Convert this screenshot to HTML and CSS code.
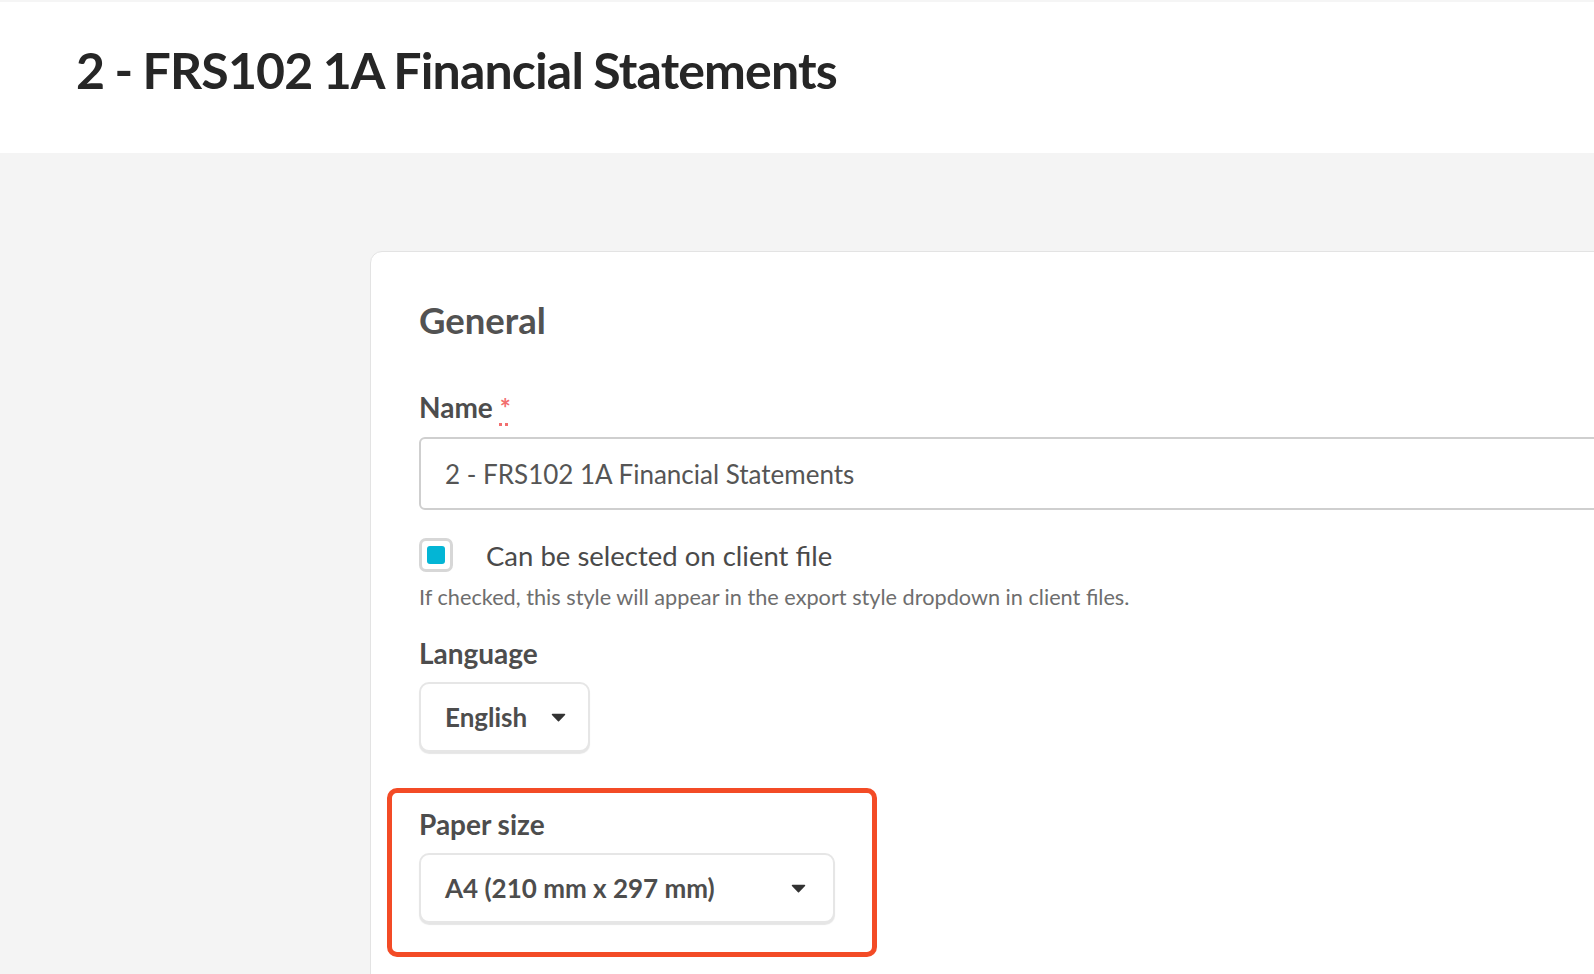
FILE: index.html
```html
<!DOCTYPE html>
<html lang="en">
<head>
<meta charset="utf-8">
<title>2 - FRS102 1A Financial Statements</title>
<link rel="stylesheet" href="styles.css">
</head>
<body>
<header class="page-header">
  <h1 class="page-title">2 - FRS102 1A Financial Statements</h1>
</header>
<main class="page-main">
  <section class="card">
    <h2 class="card-title">General</h2>

    <div class="field">
      <label class="field-label" for="name">Name <abbr class="req" title="required">*</abbr></label>
      <input class="text-input" id="name" type="text" value="2 - FRS102 1A Financial Statements">
    </div>

    <div class="field field-check">
      <label class="check-row">
        <span class="check-box"><span class="check-fill"></span></span>
        <span class="check-label">Can be selected on client file</span>
      </label>
      <p class="help">If checked, this style will appear in the export style dropdown in client files.</p>
    </div>

    <div class="field field-lang">
      <div class="field-label">Language</div>
      <div class="select select-lang">
        <span class="select-value">English</span>
        <svg class="caret" width="15" height="9" viewBox="0 0 15 9"><path d="M1.5 1.5 H13.5 L7.5 7.8 Z" fill="#333" stroke="#333" stroke-width="1.5" stroke-linejoin="round"/></svg>
      </div>
    </div>

    <div class="highlight">
      <div class="field-label">Paper size</div>
      <div class="select select-paper">
        <span class="select-value">A4 (210 mm x 297 mm)</span>
        <svg class="caret" width="15" height="9" viewBox="0 0 15 9"><path d="M1.5 1.5 H13.5 L7.5 7.8 Z" fill="#333" stroke="#333" stroke-width="1.5" stroke-linejoin="round"/></svg>
      </div>
    </div>
  </section>
</main>
</body>
</html>
```

FILE: styles.css
```css
* { box-sizing: border-box; }

html, body {
  margin: 0;
  padding: 0;
}

body {
  background: #f4f4f4;
  font-family: Lato, "Open Sans", "Liberation Sans", sans-serif;
  color: #4d4d4d;
  overflow: hidden;
  height: 974px;
}

.page-header {
  background: #ffffff;
  height: 153px;
  padding: 38px 0 0 76px;
  border-top: 2px solid #f5f5f5;
}

.page-title {
  margin: 0;
  font-size: 50px;
  line-height: 60px;
  font-weight: 700;
  color: #262626;
  letter-spacing: -0.85px;
  word-spacing: -1px;
}

.page-main {
  padding: 98px 0 0 370px;
}

.card {
  width: 1400px;
  min-height: 900px;
  background: #ffffff;
  border: 1px solid #e3e3e3;
  border-radius: 12px;
  padding: 47px 0 0 48px;
}

.card-title {
  margin: 0 0 50px;
  font-size: 36.5px;
  line-height: 43px;
  font-weight: 700;
  color: #525252;
}

.field-label {
  display: block;
  font-size: 28px;
  line-height: 31px;
  font-weight: 700;
  color: #4d4d4d;
  margin-bottom: 13px;
}

.req {
  color: #f26e6e;
  font-size: 26px;
  text-decoration: underline dotted #f26e6e;
  text-decoration-thickness: 3px;
  text-underline-offset: 5px;
  cursor: help;
}

.text-input {
  display: block;
  width: 1300px;
  height: 73px;
  border: 2px solid #cfcfcf;
  border-radius: 6px;
  padding: 0 24px;
  font-family: inherit;
  font-size: 26px;
  color: #555555;
  background: #fff;
  outline: none;
}

.field-check {
  margin-top: 28px;
}

.check-row {
  display: flex;
  align-items: center;
  gap: 33px;
}

.check-box {
  width: 34px;
  height: 34px;
  border: 3px solid #d7d7d7;
  border-radius: 7px;
  display: flex;
  align-items: center;
  justify-content: center;
  background: #fff;
}

.check-fill {
  width: 18px;
  height: 18px;
  border-radius: 3px;
  background: #03b5d5;
}

.check-label {
  font-size: 27.5px;
  line-height: 31px;
  color: #4a4a4a;
}

.help {
  margin: 13px 0 0;
  font-size: 21.7px;
  line-height: 25px;
  color: #6e6e6e;
}

.field-lang {
  margin-top: 28px;
}

.select {
  display: inline-flex;
  align-items: center;
  height: 70px;
  background: #fff;
  border: 2px solid #e6e6e6;
  border-radius: 10px;
  box-shadow: 0 2px 1px rgba(0, 0, 0, 0.10);
  padding: 0 25px 0 24px;
  font-size: 26px;
  font-weight: 700;
  color: #4d4d4d;
}

.select-lang {
  width: 171px;
  gap: 24px;
}

.select-paper {
  width: 416px;
  justify-content: space-between;
  padding-right: 27px;
}

.caret {
  display: block;
  flex: none;
}

.highlight {
  width: 490px;
  margin: 36px 0 0 -32px;
  border: 5px solid #f34b26;
  border-radius: 10px;
  padding: 16px 0 29px 27px;
}
```
